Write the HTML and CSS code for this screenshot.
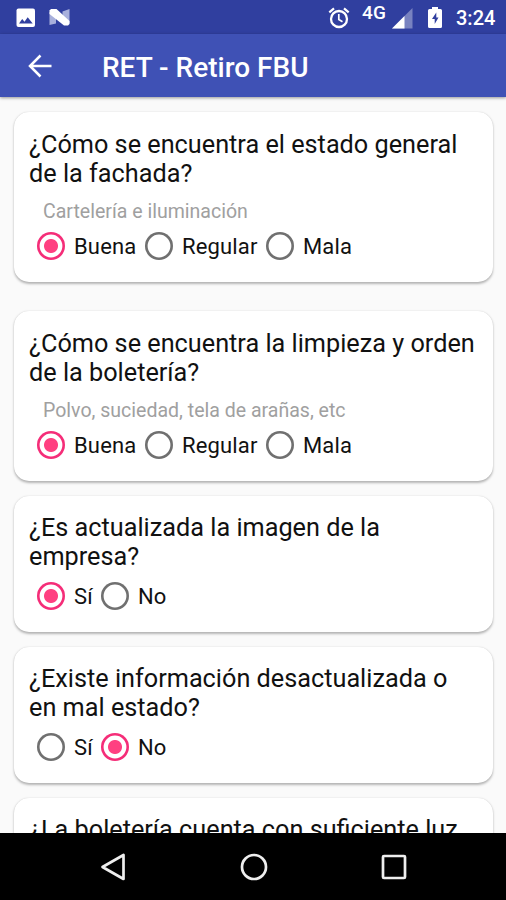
FILE: index.html
```html
<!DOCTYPE html>
<html lang="es">
<head>
<meta charset="utf-8">
<title>RET - Retiro FBU</title>
<link rel="stylesheet" href="styles.css">
</head>
<body>
<div class="screen">
  <header class="status">
    <svg class="picture" width="20" height="20" viewBox="0 0 20 20"><rect x=".5" y=".5" width="18.5" height="18.5" rx="2" fill="#fff"/><path d="M3 15.5 6.2 11l2.3 2.8 3.2-4.600 5 6.3z" fill="#303f9f"/></svg>
    <svg class="nougat" width="22" height="18" viewBox="0 0 22 18"><path d="M.5 4 7 7v8.500L.5 17zM20.500 1v14.500l-7-4V3.500z" fill="#a8b0dc"/><path d="M.5 2.500 2 1h5.500L20.500 13v3L19 17.500h-4L.5 6z" fill="#fff"/></svg>
    <span class="spacer"></span>
    <svg class="alarm" width="22" height="22" viewBox="0 0 22 22" fill="none" stroke="#fff"><circle cx="11" cy="12" r="8" stroke-width="2.300"/><path d="M1.300 5.300 6 1.300M20.700 5.300 16 1.300" stroke-width="2.200"/><path d="M10.800 7v5.500l3.700 2.200" stroke-width="1.700"/></svg>
    <span class="network">4G</span>
    <svg class="signal" width="21" height="21" viewBox="0 0 21 21"><path d="M20.500 0v20.500H0z" fill="#7882c0"/><path d="M12.500 8v12.500H0z" fill="#fff"/></svg>
    <svg class="battery" width="14" height="22" viewBox="0 0 14 22"><path d="M4 0h6v2h2.500Q14 2 14 3.500v16q0 1.500-1.500 1.500h-11Q0 21 0 19.500v-16Q0 2 1.500 2H4z" fill="#fff"/><path d="M8.300 5.500 4 12h2.700v5L10.500 10.500H8.300z" fill="#303f9f"/></svg>
    <time class="clock">3:24</time>
  </header>
  <div class="toolbar">
    <svg class="back" width="24" height="24" viewBox="0 0 24 24" fill="none" stroke="#fff" stroke-width="2.500"><path d="M23.500 12H2.500M12.500 1.500 2 12l10.500 10.500"/></svg>
    <h1>RET - Retiro FBU</h1>
  </div>
  <main class="list">
    <section class="card spaced">
      <h2>¿Cómo se encuentra el estado general<br>de la fachada?</h2>
      <p class="hint">Cartelería e iluminación</p>
      <div class="options"><span class="radio on"></span><span class="label buena">Buena</span><span class="radio"></span><span class="label regular">Regular</span><span class="radio"></span><span class="label">Mala</span></div>
    </section>
    <section class="card">
      <h2>¿Cómo se encuentra la limpieza y orden<br>de la boletería?</h2>
      <p class="hint">Polvo, suciedad, tela de arañas, etc</p>
      <div class="options"><span class="radio on"></span><span class="label buena">Buena</span><span class="radio"></span><span class="label regular">Regular</span><span class="radio"></span><span class="label">Mala</span></div>
    </section>
    <section class="card short">
      <h2>¿Es actualizada la imagen de la<br>empresa?</h2>
      <div class="options"><span class="radio on"></span><span class="label si">Sí</span><span class="radio"></span><span class="label">No</span></div>
    </section>
    <section class="card short">
      <h2>¿Existe información desactualizada o<br>en mal estado?</h2>
      <div class="options"><span class="radio"></span><span class="label si">Sí</span><span class="radio on"></span><span class="label">No</span></div>
    </section>
    <section class="card short">
      <h2>¿La boletería cuenta con suficiente luz</h2>
    </section>
  </main>
  <nav class="navbar">
    <svg width="26" height="28" viewBox="0 0 26 28"><path d="M23.500 2v24L2.500 14z" fill="none" stroke="#eee" stroke-width="2.700" stroke-linejoin="round"/></svg>
    <svg width="28" height="28" viewBox="0 0 28 28"><circle cx="14" cy="14" r="12" fill="none" stroke="#eee" stroke-width="2.700"/></svg>
    <svg width="26" height="26" viewBox="0 0 26 26"><rect x="2" y="2" width="22" height="22" rx="1" fill="none" stroke="#eee" stroke-width="2.700"/></svg>
  </nav>
</div>
</body>
</html>
```
FILE: styles.css
```css
* { box-sizing: border-box; }
body { margin: 0; font-family: Roboto, "Liberation Sans", sans-serif; }
h1, h2, p { margin: 0; font-weight: 400; }
svg { display: block; flex: none; }
.screen { width: 506px; height: 900px; display: flex; flex-direction: column; overflow: hidden; background: #fafafa; }
.status { flex: none; height: 34px; display: flex; align-items: flex-start; background: #303f9f; color: #fff; padding-left: 16px; }
.picture { margin-top: 8px; }
.nougat { margin: 8px 0 0 13px; }
.spacer { flex: 1; }
.alarm { margin: 7px 12px 0 0; }
.network { width: 26px; margin-top: 2px; font-size: 19px; line-height: 22px; font-weight: 500; letter-spacing: .3px; white-space: nowrap; }
.signal { margin: 8px 15px 0 4px; }
.battery { margin: 7px 14px 0 0; }
.clock { width: 50px; margin-top: 6px; font-size: 20px; line-height: 25px; font-weight: 500; white-space: nowrap; }
.toolbar { flex: none; height: 63px; display: flex; align-items: center; padding-left: 28px; background: #3f51b5; color: #fff; z-index: 1; box-shadow: 0 1px 3px rgba(0,0,0,.4); }
.back { margin-right: 50px; }
.toolbar h1 { font-size: 28px; line-height: 32px; font-weight: 500; margin-top: 5px; white-space: nowrap; }
.list { flex: 1; min-height: 0; overflow: hidden; padding: 15px 13px 0 14px; }
.card { height: 170px; margin-bottom: 15px; padding: 18px 15px 0; border-radius: 15px; background: #fff; box-shadow: 0 1.5px 2.500px rgba(0,0,0,.28), 0 0 1px rgba(0,0,0,.1); }
.card.spaced { margin-bottom: 29px; }
.card.short { height: 136px; padding-top: 17px; }
.card h2 { font-size: 25.250px; line-height: 29px; color: #111; white-space: nowrap; }
.hint { margin: 12px 0 0 14px; font-size: 19.550px; line-height: 24px; color: #a0a0a0; white-space: nowrap; }
.options { display: flex; align-items: center; height: 28px; margin: 8px 0 0 8px; }
.short .options { margin-top: 11px; }
.radio { flex: none; width: 28px; height: 28px; border-radius: 50%; box-shadow: inset 0 0 0 2.600px #707070; }
.radio.on { background: radial-gradient(circle, #ff4081 6.500px, transparent 7.500px); box-shadow: inset 0 0 0 2.600px #f52d78; }
.label { margin-left: 9px; padding-top: 1px; font-size: 22px; line-height: 28px; letter-spacing: .15px; color: #111; white-space: nowrap; }
.buena { width: 71px; }
.regular { width: 84px; }
.si { width: 27px; }
.navbar { flex: none; height: 67px; display: flex; align-items: center; justify-content: space-between; padding: 0 99px 0 100px; background: #000; }
```
